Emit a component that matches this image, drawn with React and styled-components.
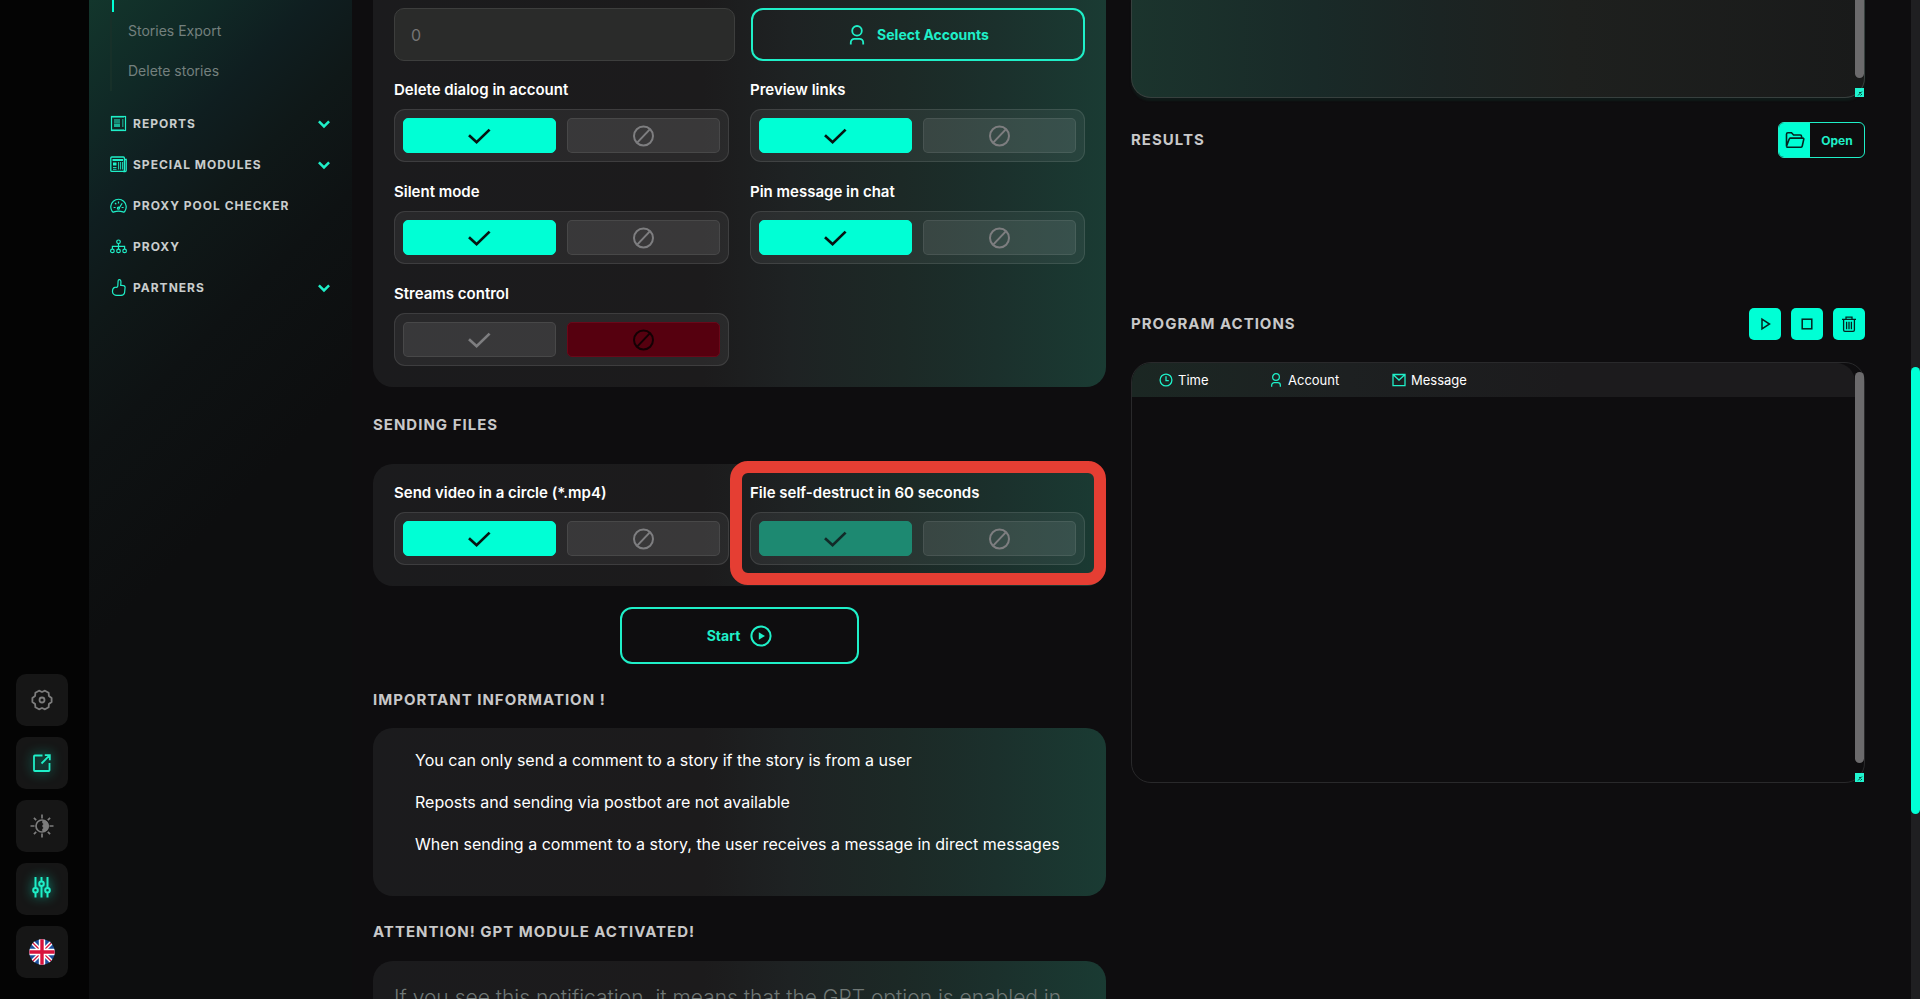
import styled, { createGlobalStyle, css } from "styled-components";

const GlobalStyle = createGlobalStyle`
  * {
    box-sizing: border-box;
  }
  body {
    margin: 0;
    background: #0e0d0f;
    color: #fff;
    font-family: Inter, "Open Sans", sans-serif;
    overflow: hidden;
  }
  button, input {
    font-family: inherit;
  }
`;

const accent = "#00ffd5";
const accentSoft = "#1fefc8";

const Page = styled.div`
  display: grid;
  grid-template-columns: 89px 263px 1fr;
  grid-template-rows: minmax(0, 1fr);
  height: 100vh;
  overflow: hidden;
`;

const Rail = styled.nav`
  display: flex;
  flex-direction: column;
  justify-content: flex-end;
  align-items: center;
  gap: 11px;
  padding: 0 21px 21px 16px;
  background: #040404;
`;

const RailButton = styled.button`
  display: flex;
  align-items: center;
  justify-content: center;
  width: 52px;
  height: 52px;
  padding: 0;
  border: none;
  border-radius: 10px;
  background: #161616;
  color: #7d7d7d;
  cursor: pointer;
  ${(props) =>
    props.$active &&
    css`
      color: ${accentSoft};
      svg {
        filter: drop-shadow(0 0 6px rgba(0, 255, 213, 0.7));
      }
    `}
`;

const Sidebar = styled.aside`
  padding: 0 22px 0 21px;
  background: linear-gradient(135deg, #13362c 0, #102926 90px, #0f1e20 160px, #0f1818 230px, #0e1213 320px, #0d0e0f 460px);
`;

const SubList = styled.ul`
  height: 91px;
  margin: 0 0 12px;
  padding: 11px 0 0 16px;
  border-left: 2px solid #173029;
  list-style: none;
  position: relative;
  &::before {
    content: "";
    position: absolute;
    left: 0;
    top: 0;
    width: 2px;
    height: 12px;
    background: ${accent};
  }
`;

const SubLink = styled.a`
  display: block;
  line-height: 40px;
  font-size: 14px;
  color: #74807e;
  text-decoration: none;
`;

const NavLink = styled.a`
  display: flex;
  align-items: center;
  gap: 6px;
  height: 41px;
  color: #c9cdcd;
  font-size: 12px;
  font-weight: 700;
  letter-spacing: 1px;
  text-decoration: none;
  svg {
    color: ${accentSoft};
  }
  svg:last-child:not(:first-child) {
    margin-left: auto;
  }
`;

const Main = styled.main`
  display: grid;
  grid-template-columns: 733fr 734fr;
  gap: 25px;
  align-items: start;
  padding: 0 55px 0 21px;
  background: #0e0d0f;
`;

const Column = styled.div`
  display: flex;
  flex-direction: column;
  min-width: 0;
`;

const Panel = styled.section`
  padding: 19px 21px 21px;
  border-radius: 20px;
  background: linear-gradient(90deg, #1b1b1d 0%, #1c1b1c 45%, #1e2223 57%, #1c2926 72%, #1b302c 85%, #1a3b33 100%);
`;

const OptionsPanel = styled(Panel)`
  padding-top: 8px;
  border-radius: 0 0 20px 20px;
`;

const InputRow = styled.div`
  display: grid;
  grid-template-columns: 341fr 334fr;
  gap: 16px;
  margin-bottom: 19px;
`;

const NumberInput = styled.input`
  min-width: 0;
  height: 53px;
  padding: 0 16px;
  border: 1px solid #3d3e3d;
  border-radius: 10px;
  background: #2a2b2a;
  color: #757575;
  font-size: 16px;
  outline: none;
  &::placeholder {
    color: #757575;
  }
`;

const OutlineButton = styled.button`
  display: flex;
  align-items: center;
  justify-content: center;
  gap: 10px;
  height: 53px;
  padding: 0;
  border: 2px solid ${accentSoft};
  border-radius: 12px;
  background: transparent;
  color: ${accentSoft};
  font-size: 14px;
  font-weight: 700;
  cursor: pointer;
`;

const StartButton = styled(OutlineButton)`
  align-self: center;
  width: 239px;
  height: 57px;
  margin-top: 21px;
`;

const FieldGrid = styled.div`
  display: grid;
  grid-template-columns: 1fr 1fr;
  gap: 20px 21px;
`;

const Field = styled.div`
  position: relative;
`;

const Label = styled.div`
  margin-bottom: 9px;
  font-size: 15px;
  font-weight: 600;
  line-height: 20px;
`;

const Switch = styled.div`
  display: grid;
  grid-template-columns: 1fr 1fr;
  gap: 11px;
  height: 53px;
  padding: 8px;
  border: 1px solid rgba(255, 255, 255, 0.1);
  border-radius: 11px;
  background: rgba(255, 255, 255, 0.06);
`;

const fills = {
  on: css`
    background: ${accent};
    border-color: ${accent};
    color: #061412;
  `,
  dim: css`
    background: #1d8971;
    border-color: #1d8971;
    color: #122a28;
  `,
  off: css`
    background: #56000f;
    border-color: #6a0819;
    color: #140004;
  `,
};

const SwitchButton = styled.button`
  display: flex;
  align-items: center;
  justify-content: center;
  padding: 0;
  border: 1px solid rgba(255, 255, 255, 0.08);
  border-radius: 5px;
  background: rgba(255, 255, 255, 0.08);
  color: #7e7e80;
  cursor: pointer;
  ${(props) => fills[props.$fill]}
`;

const Highlight = styled.div`
  position: absolute;
  inset: -22px -21px -20px -20px;
  border: 12px solid #e53e33;
  border-radius: 18px;
  pointer-events: none;
`;

const Heading = styled.h2`
  margin: ${(props) => props.$space || 0};
  color: #c8c8c9;
  font-size: 15px;
  font-weight: 700;
  letter-spacing: 1px;
  line-height: 20px;
`;

const NotePanel = styled(Panel)`
  padding: 11px 21px 31px;
`;

const NoteList = styled.ul`
  margin: 0;
  padding: 0 21px;
  list-style: none;
  font-size: 16px;
  line-height: 42px;
`;

const Notice = styled.p`
  margin: 0;
  color: #6f7775;
  font-size: 21px;
  font-weight: 300;
  line-height: 36px;
`;

const Frame = styled.div`
  position: relative;
  border: 1px solid #29292b;
  border-radius: 20px;
`;

const MessagePreview = styled(Frame)`
  height: 98px;
  border-color: #37403e;
  border-top: none;
  border-radius: 0 0 20px 20px;
  background: linear-gradient(90deg, #1b342d 0%, #192a28 25%, #1b2423 42%, #1e201e 60%, #191a1a 100%);
  box-shadow: 0 3px 2px rgba(18, 44, 38, 0.4);
`;

const Thumb = styled.div`
  position: absolute;
  right: 0;
  top: ${(props) => props.$top}px;
  bottom: 19px;
  width: 9px;
  border-radius: ${(props) => (props.$top ? "5px" : "0 0 5px 5px")};
  background: #6b6a6c;
`;

const Grip = styled.svg`
  position: absolute;
  right: 0;
  bottom: 0;
`;

const BarRow = styled.div`
  display: flex;
  align-items: center;
  justify-content: space-between;
  margin-top: 24px;
  height: 36px;
`;

const OpenButton = styled.button`
  display: flex;
  align-items: center;
  height: 36px;
  width: 87px;
  padding: 0;
  border: 1px solid ${accentSoft};
  border-radius: 6px;
  overflow: hidden;
  background: transparent;
  color: ${accentSoft};
  font-size: 12px;
  font-weight: 700;
  cursor: pointer;
`;

const OpenIcon = styled.span`
  display: flex;
  align-items: center;
  justify-content: center;
  width: 31px;
  height: 100%;
  background: ${accent};
  color: #042420;
`;

const OpenText = styled.span`
  flex: 1;
  text-align: center;
`;

const ActionsRow = styled(BarRow)`
  margin: 148px 0 20px;
`;

const Actions = styled.div`
  display: flex;
  gap: 10px;
`;

const ActionButton = styled.button`
  display: flex;
  align-items: center;
  justify-content: center;
  width: 32px;
  height: 32px;
  padding: 0;
  border: none;
  border-radius: 5px;
  background: ${accent};
  color: #04231f;
  cursor: pointer;
`;

const LogFrame = styled(Frame)`
  height: 421px;
`;

const LogClip = styled.div`
  margin-right: 9px;
  border-radius: 19px 19px 0 0;
  overflow: hidden;
`;

const LogTable = styled.table`
  width: 100%;
  border-collapse: collapse;
  table-layout: fixed;
  thead {
    background: linear-gradient(90deg, #1b2723 0%, #1d2021 30%, #1c1b1d 60%);
  }
  th {
    height: 34px;
    padding: 0;
    font-size: 13px;
    font-weight: 400;
    text-align: left;
  }
  th:nth-child(1) {
    width: 137px;
    padding-left: 27px;
  }
  th:nth-child(2) {
    width: 123px;
  }
`;

const HeadCell = styled.div`
  display: flex;
  align-items: center;
  gap: 5px;
  svg {
    color: ${accentSoft};
  }
`;

const PageTrack = styled.div`
  position: fixed;
  top: 0;
  right: 0;
  bottom: 0;
  width: 9px;
  background: #1f1f21;
`;

const PageThumb = styled.div`
  height: 447px;
  margin-top: 367px;
  border-radius: 5px;
  background: ${accent};
`;

const Icon = ({ size = 18, box = "0 0 24 24", width = 2, children }) => (
  <svg width={size} height={size} viewBox={box} fill="none" stroke="currentColor" strokeWidth={width} aria-hidden="true">
    {children}
  </svg>
);

const CheckIcon = () => (
  <Icon size={24} width={2.7}>
    <path d="M1 11.2L8.6 18.2L21.6 5.6" />
  </Icon>
);

const BanIcon = () => (
  <Icon size={22} box="0 0 22 22">
    <circle cx="10.5" cy="11" r="9.5" />
    <path d="M4.2 17.6L16.8 4.4" />
  </Icon>
);

const PersonIcon = ({ size = 20, width = 1.8 }) => (
  <Icon size={size} box="0 0 20 20" width={width}>
    <circle cx="10" cy="5.8" r="4.8" />
    <path d="M3.8 19.5V17.5a3.6 3.6 0 0 1 3.6-3.6h5.2a3.6 3.6 0 0 1 3.6 3.6v2" />
  </Icon>
);

const ChevronIcon = () => (
  <Icon size={12} box="0 0 12 12" width={2.5}>
    <path d="M0.9 3.4L6 8.4L11.1 3.4" />
  </Icon>
);

const ReportsIcon = () => (
  <Icon size={17} box="0 0 17 17" width={1.2}>
    <rect x="1.5" y="1.5" width="14" height="14" />
    <path d="M2.5 2.5h12M2.5 14.5h12" strokeDasharray="1 1" />
    <path d="M4 5h6M4 7h6M12 5h1.5M12 7h1.5M12 9h1.5M12 11h1.5" />
    <rect x="4" y="8.5" width="6" height="3.5" fill="currentColor" stroke="none" opacity="0.7" />
  </Icon>
);

const ModulesIcon = () => (
  <Icon size={17} box="0 0 17 17" width={1.3}>
    <rect x="0.8" y="1" width="13.6" height="14.4" rx="1" />
    <path d="M14.4 3.5h1.8v11a1 1 0 0 1-1 1h-2" />
    <path d="M2.5 4h10.5" strokeWidth="2" />
    <rect x="3" y="6.5" width="3.5" height="3" fill="currentColor" stroke="none" />
    <path d="M3 11.5h3.5M3 13.3h3.5M8.6 6v7.5M10.6 6v7.5M12.6 6v7.5" strokeWidth="0.9" />
  </Icon>
);

const GaugeIcon = () => (
  <Icon size={17} box="0 0 17 17" width={1.2}>
    <path d="M2.2 14.4A7.7 7.7 0 1 1 14.8 14.4Q14.2 15.4 13 14.9Q8.5 13.4 4 14.9Q2.8 15.4 2.2 14.4Z" />
    <path d="M8.5 4.5v2M3.6 10.5h2M11.6 10.5h2M5 6l1.3 1.2M9 11.2L12.2 6.2" />
    <circle cx="8.4" cy="11.2" r="1" />
  </Icon>
);

const NetworkIcon = () => (
  <Icon size={17} box="0 0 17 17" width={1.2}>
    <circle cx="8.5" cy="3.8" r="1.8" />
    <circle cx="2.4" cy="12.9" r="1.8" />
    <circle cx="8.5" cy="12.9" r="1.8" />
    <circle cx="14.6" cy="12.9" r="1.8" />
    <path d="M8.5 5.6v5.5M2.4 11.1V8.4h12.2v2.7" />
  </Icon>
);

const ThumbIcon = () => (
  <Icon size={17} box="0 0 17 17" width={1.2}>
    <path d="M7.8 7.2L8.1 2C8.2.4 10.4.1 10.8 1.8C11.2 3.6 10.6 5.4 10.7 6.4C13 6.3 15 6.8 15.1 8.2L14.6 13.5C14.3 15.6 13.2 16.3 11 16.4H6.7C4.6 16.4 2.6 14.7 2.5 12.6C2.4 10.6 3.2 8.7 4.8 8.3C6 8 7.4 9.2 7.8 7.2Z" />
  </Icon>
);

const FlagIcon = () => (
  <svg width="26" height="26" viewBox="0 0 26 26" aria-hidden="true">
    <clipPath id="flag">
      <circle cx="13" cy="13" r="12.7" />
    </clipPath>
    <g clipPath="url(#flag)">
      <rect width="26" height="26" fill="#1d4f9c" />
      <path d="M0 0L26 26M26 0L0 26" stroke="#fff" strokeWidth="4.2" />
      <path d="M0 0L26 26M26 0L0 26" stroke="#d8123c" strokeWidth="1.3" />
      <path d="M13 0V26M0 13H26" stroke="#fff" strokeWidth="6.4" />
      <path d="M13 0V26M0 13H26" stroke="#d8123c" strokeWidth="3.4" />
    </g>
  </svg>
);

const railItems = [
  {
    name: "Settings",
    icon: (
      <Icon size={22} box="0 0 22 22" width={1.8}>
        <path
          d="M20.6 9L17.9 7L17.6 3.7L14 1.7L11 3L8 1.7L4.4 3.7L4.1 7L1.4 9V13L4.1 15L4.4 18.3L8 20.3L11 19L14 20.3L17.6 18.3L17.9 15L20.6 13Z"
          strokeLinejoin="round"
        />
        <circle cx="11" cy="11" r="2.5" />
      </Icon>
    ),
  },
  {
    name: "Open in new window",
    active: true,
    icon: (
      <Icon size={20} box="0 0 20 20" width={1.8}>
        <path d="M10.5 2.5H2.8a.8.8 0 0 0-.8.8V17.2a.8.8 0 0 0 .8.8H16.7a.8.8 0 0 0 .8-.8V10M9.5 10.5L17.3 2.7M12.8 2.2H17.8V7.2" />
      </Icon>
    ),
  },
  {
    name: "Theme",
    icon: (
      <Icon size={24} width={1.7}>
        <circle cx="12" cy="12" r="6" />
        <path d="M13 6A6 6 0 0 1 13 18Q11 15.5 13.5 14Q11 12 13.5 10Q11 8.5 13 6Z" fill="currentColor" stroke="none" />
        <path d="M12 .5v4M12 19.5v4M.5 12h4M19.5 12h4M3.9 3.9l2.3 2.3M17.8 17.8l2.3 2.3M3.9 20.1l2.3-2.3M17.8 6.2l2.3-2.3" />
      </Icon>
    ),
  },
  {
    name: "Controls",
    active: true,
    icon: (
      <Icon size={26} box="0 0 26 26" width={2}>
        <path d="M6.5 1V12M6.5 16.5V21.5M12.5 1V5.5M12.5 10V21.5M18.5 1V12M18.5 16.5V21.5" />
        <circle cx="6.5" cy="14.2" r="2.3" />
        <circle cx="12.5" cy="7.8" r="2.3" />
        <circle cx="18.5" cy="14.2" r="2.3" />
      </Icon>
    ),
  },
  { name: "Language", icon: <FlagIcon /> },
];

const navItems = [
  { label: "REPORTS", icon: <ReportsIcon />, open: true },
  { label: "SPECIAL MODULES", icon: <ModulesIcon />, open: true },
  { label: "PROXY POOL CHECKER", icon: <GaugeIcon /> },
  { label: "PROXY", icon: <NetworkIcon /> },
  { label: "PARTNERS", icon: <ThumbIcon />, open: true },
];

const options = [
  { label: "Delete dialog in account", on: "on" },
  { label: "Preview links", on: "on" },
  { label: "Silent mode", on: "on" },
  { label: "Pin message in chat", on: "on" },
  { label: "Streams control", off: "off" },
];

const Toggle = ({ label, on, off, children }) => (
  <Field role="group" aria-label={label}>
    <Label>{label}</Label>
    <Switch>
      <SwitchButton $fill={on} aria-label="Enable" aria-pressed={Boolean(on)}>
        <CheckIcon />
      </SwitchButton>
      <SwitchButton $fill={off} aria-label="Disable" aria-pressed={Boolean(off)}>
        <BanIcon />
      </SwitchButton>
    </Switch>
    {children}
  </Field>
);

const ResizeGrip = () => (
  <Grip width="9" height="9" viewBox="0 0 9 9" aria-hidden="true">
    <rect width="9" height="9" fill="#20f5d0" />
    <path d="M3 7.5L7 3.5M5.5 7.5L7 6M4 4.5H6" stroke="#06463c" fill="none" />
  </Grip>
);

const App = () => {
  return (
    <>
      <GlobalStyle />
      <Page>
        <Rail>
          {railItems.map((item) => (
            <RailButton key={item.name} $active={item.active} aria-label={item.name}>
              {item.icon}
            </RailButton>
          ))}
        </Rail>

        <Sidebar>
          <SubList>
            <li><SubLink href="#export">Stories Export</SubLink></li>
            <li><SubLink href="#delete">Delete stories</SubLink></li>
          </SubList>
          {navItems.map((item) => (
            <NavLink key={item.label} href="#">
              {item.icon}
              {item.label}
              {item.open && <ChevronIcon />}
            </NavLink>
          ))}
        </Sidebar>

        <Main>
          <Column>
            <OptionsPanel>
              <InputRow>
                <NumberInput type="text" placeholder="0" aria-label="Amount" />
                <OutlineButton>
                  <PersonIcon />
                  Select Accounts
                </OutlineButton>
              </InputRow>
              <FieldGrid>
                {options.map((option) => (
                  <Toggle key={option.label} {...option} />
                ))}
              </FieldGrid>
            </OptionsPanel>

            <Heading $space="28px 0 29px">SENDING FILES</Heading>
            <Panel>
              <FieldGrid>
                <Toggle label="Send video in a circle (*.mp4)" on="on" />
                <Toggle label="File self-destruct in 60 seconds" on="dim">
                  <Highlight />
                </Toggle>
              </FieldGrid>
            </Panel>

            <StartButton>
              Start
              <Icon size={22} box="0 0 22 22">
                <circle cx="11" cy="11" r="9.6" />
                <path d="M8.8 7.2L15 11L8.8 14.8Z" fill="currentColor" stroke="none" />
              </Icon>
            </StartButton>

            <Heading $space="26px 0 18px">IMPORTANT INFORMATION !</Heading>
            <NotePanel>
              <NoteList>
                <li>You can only send a comment to a story if the story is from a user</li>
                <li>Reposts and sending via postbot are not available</li>
                <li>When sending a comment to a story, the user receives a message in direct messages</li>
              </NoteList>
            </NotePanel>

            <Heading $space="26px 0 19px">ATTENTION! GPT MODULE ACTIVATED!</Heading>
            <Panel>
              <Notice>If you see this notification, it means that the GPT option is enabled in</Notice>
            </Panel>
          </Column>

          <Column>
            <MessagePreview>
              <Thumb $top={0} />
              <ResizeGrip />
            </MessagePreview>

            <BarRow>
              <Heading>RESULTS</Heading>
              <OpenButton>
                <OpenIcon>
                  <Icon size={20} box="0 0 20 20" width={1.6}>
                    <path d="M1.5 16V4.2a1.4 1.4 0 0 1 1.4-1.4H6.5L8.6 5h6.6a1.4 1.4 0 0 1 1.4 1.4V8M1.5 16.3L4.2 9a1.2 1.2 0 0 1 1.1-.9H18a.8.8 0 0 1 .8 1L17.2 16.2a1.2 1.2 0 0 1-1.2 1H2.6a1.1 1.1 0 0 1-1.1-1.1Z" />
                  </Icon>
                </OpenIcon>
                <OpenText>Open</OpenText>
              </OpenButton>
            </BarRow>

            <ActionsRow>
              <Heading>PROGRAM ACTIONS</Heading>
              <Actions>
                <ActionButton aria-label="Run">
                  <Icon size={14} box="0 0 14 14" width={1.5}>
                    <path d="M4 2.2L11.5 7L4 11.8Z" />
                  </Icon>
                </ActionButton>
                <ActionButton aria-label="Stop">
                  <Icon size={12} box="0 0 12 12" width={1.5}>
                    <rect x="1.2" y="1.2" width="9.6" height="9.6" />
                  </Icon>
                </ActionButton>
                <ActionButton aria-label="Clear">
                  <Icon size={16} box="0 0 16 16" width={1.3}>
                    <path d="M1 3.4H15M5 3.4V1.2H11V3.4M2.6 3.4V14a1.3 1.3 0 0 0 1.3 1.3h8.2a1.3 1.3 0 0 0 1.3-1.3V3.4M5.6 5.8v7.4M8 5.8v7.4M10.4 5.8v7.4" />
                  </Icon>
                </ActionButton>
              </Actions>
            </ActionsRow>

            <LogFrame>
              <LogClip>
                <LogTable>
                  <thead>
                    <tr>
                      <th>
                        <HeadCell>
                          <Icon size={14} box="0 0 14 14" width={1.3}>
                            <circle cx="7" cy="7" r="5.9" />
                            <path d="M7 3.2V7.6H9.8" />
                          </Icon>
                          Time
                        </HeadCell>
                      </th>
                      <th>
                        <HeadCell>
                          <PersonIcon size={14} />
                          Account
                        </HeadCell>
                      </th>
                      <th>
                        <HeadCell>
                          <Icon size={14} box="0 0 14 14" width={1.3}>
                            <path d="M1 1.5H13V12.6H1ZM1 1.5L7 7L13 1.5" />
                          </Icon>
                          Message
                        </HeadCell>
                      </th>
                    </tr>
                  </thead>
                </LogTable>
              </LogClip>
              <Thumb $top={9} />
              <ResizeGrip />
            </LogFrame>
          </Column>
        </Main>
      </Page>
      <PageTrack>
        <PageThumb />
      </PageTrack>
    </>
  );
};

export default App;
